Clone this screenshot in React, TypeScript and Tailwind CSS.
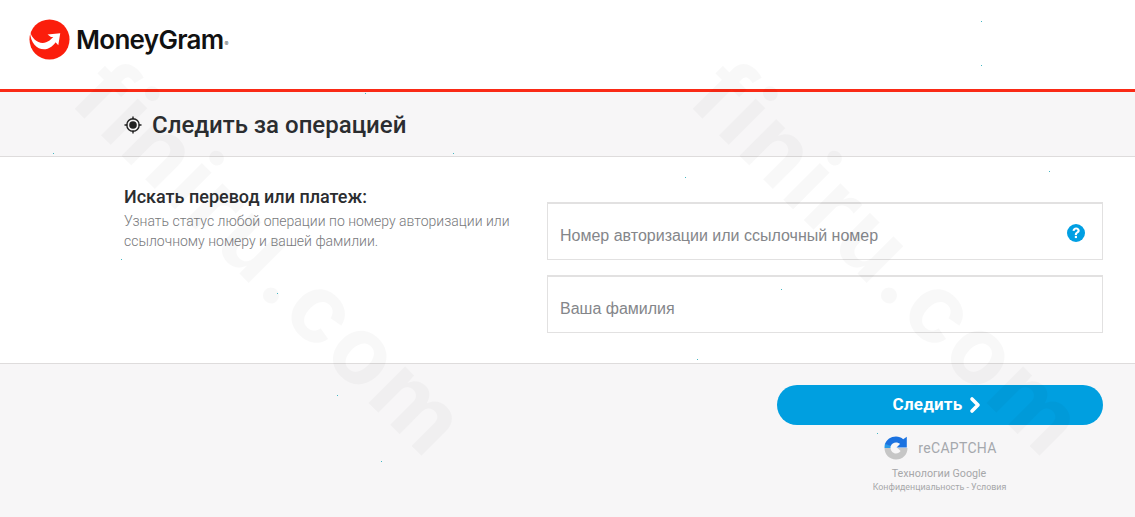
import { ChevronRight } from "lucide-react";

const SPECKS = [
  [981, 21], [981, 65], [365, 93], [53, 153], [453, 153], [1049, 171], [685, 177], [121, 259],
  [781, 289], [277, 293], [697, 359], [337, 395], [877, 433], [381, 461],
];

function Logo() {
  return (
    <div className="flex items-center">
      <svg width="41" height="41" viewBox="0 0 42 42" className="shrink-0">
        <circle cx="21" cy="21" r="20.5" fill="#fb1e0c" />
        <path d="M1 13 C1.5 25 9 32 17 31 C23 30 27 25 30 20 L26 17 C23 21 19 24.5 14 24.5 C8 24.5 3 19.5 1 13 Z" fill="#fff" />
        <path d="M19 16 L32 14.5 L30 27 L26.5 23 L26 18.5 L22.5 18.5 Z" fill="#fff" />
      </svg>
      <span className="ml-[6px] font-['Inter',sans-serif] text-[26px] leading-none font-semibold tracking-[-0.7px] text-[#111]">
        MoneyGram
      </span>
      <span className="mt-[9px] ml-[1px] font-['Inter',sans-serif] text-[6px] leading-none text-[#555]">®</span>
    </div>
  );
}

function TargetIcon() {
  return (
    <svg width="18" height="18" viewBox="0 0 18 18" className="shrink-0">
      <circle cx="9" cy="9" r="6.2" fill="none" stroke="#222" strokeWidth="1.4" />
      <circle cx="9" cy="9" r="3.8" fill="#222" />
      <path d="M9 0.5V3.5M9 14.5V17.5M0.5 9H3.5M14.5 9H17.5" stroke="#222" strokeWidth="1.4" />
    </svg>
  );
}

function HelpIcon() {
  return (
    <svg width="18" height="18" viewBox="0 0 17 17" className="shrink-0">
      <circle cx="8.5" cy="8.5" r="8.5" fill="#009fe3" />
      <path d="M5.2 6.4 C5.3 4.4 6.8 3.2 8.6 3.2 C10.6 3.2 12 4.5 12 6.1 C12 7.5 11.2 8.2 10.3 8.8 C9.6 9.2 9.4 9.5 9.4 10.4 H7.4 C7.3 9 7.8 8.3 8.8 7.6 C9.6 7.1 9.9 6.8 9.9 6.2 C9.9 5.5 9.3 5.1 8.6 5.1 C7.8 5.1 7.3 5.6 7.2 6.5 Z" fill="#fff" />
      <rect x="7.4" y="11.2" width="2" height="2.1" fill="#fff" />
    </svg>
  );
}

function RecaptchaIcon() {
  return (
    <svg width="24" height="24" viewBox="0 0 24 24" className="shrink-0">
      {/* grey lower half */}
      <path d="M0.5 12 H6.5 C6.8 15 9 17.5 12 17.5 C14 17.5 15.6 16.6 16.6 15 L13.5 12 H23.5 C23.5 18.8 18.5 23.5 12 23.5 C5.5 23.5 0.5 18.5 0.5 12 Z" fill="#c6c6c6" />
      {/* light blue left */}
      <path d="M1 7.5 L6.8 9.5 C6.6 10.3 6.5 11.1 6.5 12 H0.5 C0.5 10.5 0.6 9 1 7.5 Z" fill="#2a9be8" />
      {/* dark blue arc with arrow */}
      <path d="M1 8 C2.5 3.5 6.8 0.5 12 0.5 C14.8 0.5 17.3 1.5 19.2 3.2 L22.8 0.8 V11.5 H12.5 L16 8 C15 7 13.6 6.5 12 6.5 C9.6 6.5 7.6 8 6.8 10 Z" fill="#1b72e0" />
    </svg>
  );
}

function Field({ label, help }: { label: string; help?: boolean }) {
  return (
    <div className="flex h-[58px] items-center justify-between border border-t-2 border-[#e2e1e1] pt-[8px] pr-[17px] pl-[12px]">
      <span className="font-['Liberation_Sans',sans-serif] text-[16px] leading-none text-[#84868a]">{label}</span>
      {help && (
        <span className="-mt-[6px]">
          <HelpIcon />
        </span>
      )}
    </div>
  );
}

function Watermark({ left }: { left: string }) {
  return (
    <div
      className={`absolute top-[210px] ${left} w-[560px] rotate-45 text-center font-['Inter',sans-serif] text-[95px] leading-none font-bold tracking-[3px] whitespace-nowrap text-black/[0.028]`}
    >
      finiru.com
    </div>
  );
}

export default function App() {
  return (
    <div className="relative h-[517px] w-full overflow-hidden bg-white font-['Roboto',sans-serif]">
      <header className="flex h-[89px] items-start pt-[19px] pl-[29px]">
        <Logo />
      </header>

      <div className="flex h-[68px] items-center gap-[10px] border-t-[3px] border-b border-t-[#fa2a16] border-b-[#dedcdc] bg-[#f7f6f7] pt-[1px] pl-[124px]">
        <TargetIcon />
        <h1 className="text-[24px] leading-none font-medium text-[#2b2d30]">Следить за операцией</h1>
      </div>

      <main className="flex h-[207px] border-b border-[#dedcdc] pr-[32px] pl-[124px]">
        <div className="w-[423px] pt-[30px]">
          <h2 className="text-[18px] leading-[19px] font-medium text-[#2b2d30]">Искать перевод или платеж:</h2>
          <p className="mt-[5px] w-[400px] text-[14px] leading-[20px] font-light text-[#77787b]">
            Узнать статус любой операции по номеру авторизации или ссылочному номеру и вашей фамилии.
          </p>
        </div>
        <div className="flex flex-1 flex-col gap-[15px] pt-[45px]">
          <Field label="Номер авторизации или ссылочный номер" help />
          <Field label="Ваша фамилия" />
        </div>
      </main>

      <footer className="flex h-[153px] flex-col items-end bg-[#f7f6f7] pt-[21px] pr-[32px]">
        <div className="flex w-[326px] flex-col items-center">
          <button className="flex h-[40px] w-full items-center justify-center rounded-full bg-[#009fe0] text-[17px] font-bold tracking-[0.2px] text-white">
            Следить
            <ChevronRight size={24} strokeWidth={3.6} className="ml-[1px]" />
          </button>
          <div className="mt-[11px] flex items-center gap-[10px] pl-[1px]">
            <RecaptchaIcon />
            <span className="text-[14px] leading-none tracking-[0.3px] text-[#a5a8ad]">reCAPTCHA</span>
          </div>
          <p className="mt-[7px] -ml-[2px] text-[10.7px] leading-[13px] text-[#a6a7a9]">Технологии Google</p>
          <p className="mt-[1px] -ml-[1px] text-[8.9px] leading-[12px] text-[#a6a7a9]">Конфиденциальность - Условия</p>
        </div>
      </footer>

      {/* watermark and scan specks over the page */}
      <div className="pointer-events-none absolute inset-0">
        <Watermark left="left-[-8px]" />
        <Watermark left="left-[610px]" />
        {SPECKS.map(([x, y]) => (
          <span key={`${x}-${y}`} className="absolute h-px w-px bg-[#45b8c4]" style={{ left: x, top: y }} />
        ))}
      </div>
    </div>
  );
}
